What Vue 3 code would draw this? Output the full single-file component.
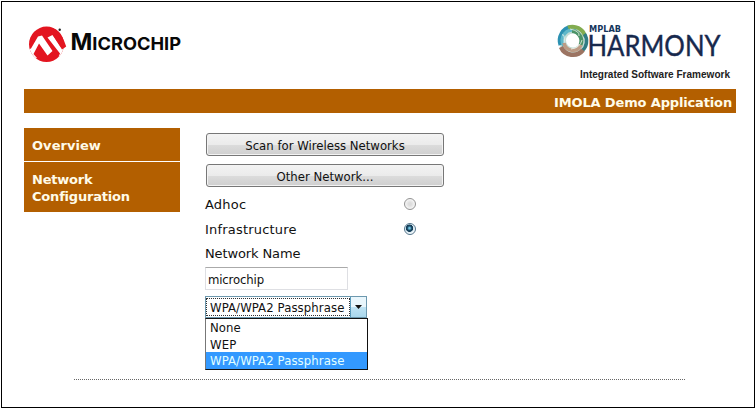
<script setup>
import { ref } from 'vue'

const navItems = ['Overview', 'Network Configuration']
const modes = ['Adhoc', 'Infrastructure']
const mode = ref('Infrastructure')
const networkName = ref('microchip')
const options = ['None', 'WEP', 'WPA/WPA2 Passphrase']
const security = ref('WPA/WPA2 Passphrase')
</script>

<template>
  <div class="page">
    <header class="brands">
      <svg class="microchip" width="160" height="42" viewBox="0 0 160 42">
        <defs>
          <clipPath id="disc"><ellipse cx="18.500" cy="20.300" rx="17.500" ry="17.700" /></clipPath>
        </defs>
        <g clip-path="url(#disc)">
          <rect width="40" height="40" fill="#e31520" />
          <path d="M-1 26 L3 24.500 L10 12.500 L14 11.500 L24.500 27 L19.500 31.500 L11 19.500 L5.500 30 L9 34 L0 36Z" fill="#fff" />
          <path d="M19.500 13.500 L24.500 11 L33.500 24 L40 22 L40 34 L30.500 32.500 L32 29.500Z" fill="#fff" />
        </g>
        <path d="M23.500 9 L23.500 3.500 L28 5.500 Q34.500 11 38.200 22.500 L34 25.500Z" fill="#e31520" />
        <circle cx="31.700" cy="5.800" r="1.200" fill="#222" />
        <text x="42.500" y="26.300" class="mc-word" textLength="110.500" lengthAdjust="spacingAndGlyphs"><tspan class="mc-cap">M</tspan>ICROCHIP</text>
      </svg>
      <svg class="harmony" width="178" height="66" viewBox="0 0 178 66">
        <g fill="none" stroke-linecap="butt">
          <circle cx="16" cy="19.500" r="10.500" stroke="#c3dcd5" stroke-width="7" />
          <path d="M3.500 24 A13 13.500 0 0 1 14 6" stroke="#2c91b2" stroke-width="4" />
          <path d="M7 25 A10 10 0 0 1 19 10" stroke="#60b8c9" stroke-width="3.500" />
          <path d="M11 6.500 A13 13 0 0 1 28 15" stroke="#82ac50" stroke-width="4" />
          <path d="M15 10 A10 10 0 0 1 23.500 24" stroke="#4c9367" stroke-width="4" />
          <path d="M27.500 13 A13 13 0 0 1 25 30" stroke="#307c83" stroke-width="3.500" />
          <path d="M26 29 A13 13 0 0 1 4 26" stroke="#9c7462" stroke-width="4.500" />
          <path d="M24 24 A9 9 0 0 1 7 22" stroke="#bd9b84" stroke-width="3.500" />
          <path d="M5 14 Q8 12 7 22 M13 8 Q23 10 22 15 M25 19 Q23 27 14 28" stroke="#eef5ef" stroke-width=".8" />
        </g>
        <text x="32" y="10.500" class="mplab" textLength="32" lengthAdjust="spacingAndGlyphs">MPLAB</text>
        <text x="30.500" y="34.500" class="harmony-word" textLength="133" lengthAdjust="spacingAndGlyphs">HARMONY</text>
        <text x="23" y="57" class="tagline" textLength="150" lengthAdjust="spacingAndGlyphs">Integrated Software Framework</text>
      </svg>
    </header>
    <h1 class="banner">IMOLA Demo Application</h1>
    <main class="body">
      <nav class="side">
        <a v-for="item in navItems" :key="item" class="nav-item">{{ item }}</a>
      </nav>
      <form class="settings" @submit.prevent>
        <button type="button" class="btn scan">Scan for Wireless Networks</button>
        <button type="button" class="btn other">Other Network...</button>
        <label v-for="m in modes" :key="m" class="mode" @click="mode = m">
          <span class="mode-name">{{ m }}</span>
          <span class="radio" :class="{ on: mode === m }"></span>
        </label>
        <div class="field-label">Network Name</div>
        <input v-model="networkName" class="field" spellcheck="false" />
        <div class="combo">
          <div class="combo-box">
            <span class="combo-value">{{ security }}</span>
            <span class="combo-arrow"><svg width="7" height="4" viewBox="0 0 7 4"><path d="M0 0H7L3.500 4Z" fill="#111" /></svg></span>
          </div>
          <ul class="menu">
            <li v-for="o in options" :key="o" :class="{ chosen: o === security }" @click="security = o">{{ o }}</li>
          </ul>
        </div>
      </form>
    </main>
    <div class="rule"></div>
  </div>
</template>

<style>
body { margin: 0; background: #fff; overflow: hidden; }
</style>

<style scoped>
* { box-sizing: border-box; }
.page {
  width: 754px; height: 407px; margin: 1px 0 0 1px; padding: 0 18px 0 22px;
  border: 1px solid #000; background: #fff; color: #111;
  font: 13px/17px "DejaVu Sans", sans-serif;
}
.brands { display: flex; justify-content: space-between; height: 87px; padding: 22px 0 0 4px; }
.microchip { display: block; }
.mc-word { font: bold 17.500px Inter, "Liberation Sans", sans-serif; fill: #080808; }
.mc-cap { font-size: 22.500px; }
.harmony { display: block; margin: -3px 1px 0 0; overflow: visible; }
.mplab { font: bold 9px "DejaVu Sans", sans-serif; fill: #15365c; }
.harmony-word { font: 28px Lato, sans-serif; fill: #17294d; stroke: #17294d; stroke-width: .4px; }
.tagline { font: bold 11px "Liberation Sans", sans-serif; fill: #222; }
.banner {
  width: 712px; height: 24px; margin: 0; padding: 0 4px 0 0; background: #b35f00; color: #fffbe8;
  font-size: 13px; font-weight: bold; line-height: 27px; letter-spacing: -.15px; text-align: right;
}
.body { display: grid; grid-template-columns: 156px 240px; column-gap: 25px; padding-top: 15px; }
.side { display: grid; row-gap: 1px; align-content: start; }
.nav-item {
  padding: 9px 48px 7px 8px; background: #b35f00; color: #fffbe8;
  font-weight: bold; letter-spacing: -.2px; width: 156px;
}
.nav-item:first-child { letter-spacing: .05px; }
.settings { display: flex; flex-direction: column; padding-top: 5px; }
.btn {
  width: 238px; height: 23px; margin: 0 0 8px 1px; padding: 0; border: 1px solid #777; border-radius: 3px;
  background: linear-gradient(#f3f3f3 0%, #ebebeb 50%, #dcdcdc 51%, #cfcfcf 100%);
  box-shadow: inset 0 0 0 1px #f3f3f3; color: #111;
  font: 13px/23px "DejaVu Sans Condensed", "DejaVu Sans", sans-serif; font-stretch: condensed;
}
.other { margin-bottom: 5px; }
.mode { display: flex; align-items: center; justify-content: space-between; width: 211px; height: 25px; }
.mode-name { letter-spacing: .2px; }
.radio { display: flex; width: 12px; height: 12px; margin-bottom: 2px; border: 1px solid #929292; border-radius: 50%; background: radial-gradient(circle, #ddd 0 20%, #f9f9f9 75%); }
.radio.on { border-color: #52748b; background: radial-gradient(circle at 45% 42%, #75c9e6 0 8%, #174765 28%, #153a52 42%, #d8eaf3 50%, #fff 75%); }
.field-label { height: 25px; line-height: 23px; letter-spacing: -.12px; }
.field {
  width: 143px; height: 23px; margin: 0 0 6px; padding: 2px 2px 0; border: 1px solid #dedfe3; border-top-color: #aaa;
  outline: 0; background: #fff; color: #111; letter-spacing: -.15px;
  font: 13px "DejaVu Sans Condensed", "DejaVu Sans", sans-serif; font-stretch: condensed;
}
.combo { position: relative; width: 162px; font-family: "DejaVu Sans Condensed", "DejaVu Sans", sans-serif; font-stretch: condensed; letter-spacing: .1px; }
.combo-box { display: flex; height: 22px; border: 1px solid #6c98ae; background: #fff; }
.combo-value { width: 144px; margin: 1px 0; padding-left: 3px; border: 1px dotted #333; line-height: 17px; white-space: nowrap; }
.combo-arrow { display: flex; flex: 1; align-items: center; justify-content: center; border-left: 1px solid #5a9abb; background: linear-gradient(#e9f6fc 50%, #bfe3f4 51%, #a9d7ec); }
.menu { position: absolute; top: 22px; left: 0; width: 163px; height: 52px; margin: 0; padding: 0; border: 1px solid #111; border-left-color: #777; background: #fff; list-style: none; }
.menu li { height: 16.600px; padding-left: 4px; line-height: 17px; white-space: nowrap; }
.menu .chosen { background: #3399ff; color: #e2ffff; }
.rule { width: 611px; height: 1px; margin: 61px 0 0 50px; background: repeating-linear-gradient(90deg, #666 0 1px, #fff 1px 2px); }
</style>
